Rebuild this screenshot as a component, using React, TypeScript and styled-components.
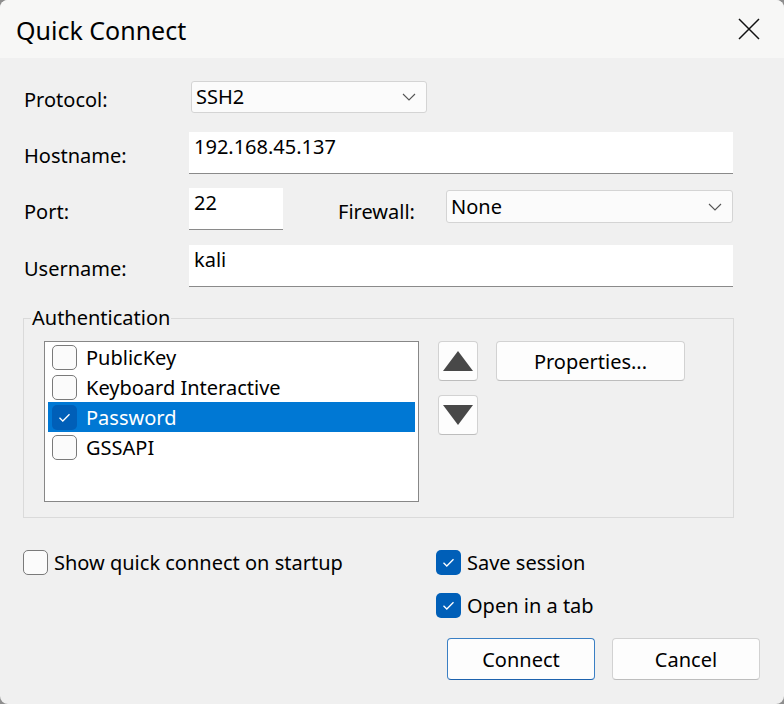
import React from 'react';
import styled, { createGlobalStyle } from 'styled-components';

const Global = createGlobalStyle`
  html, body { margin: 0; padding: 0; background: #8e8e8e; }
  body {
    width: 784px; height: 704px; overflow: hidden;
    font-family: "Noto Sans", "Open Sans", sans-serif;
    color: #000;
  }
  * { box-sizing: border-box; }
`;

const Window = styled.div`
  width: 784px;
  height: 704px;
  border-radius: 8px;
  overflow: hidden;
  background: #f0f0f0;
  display: flex;
  flex-direction: column;
`;

const TitleBar = styled.div`
  height: 58px;
  flex: none;
  background: #f7f7f6;
  display: flex;
  align-items: center;
  justify-content: space-between;
  padding: 0 23px 0 16px;
`;

const Title = styled.div`
  font-size: 25px;
  line-height: 30px;
  margin-top: 1px;
`;

const Close = styled.div`
  width: 24px;
  height: 24px;
  display: flex;
  align-items: center;
  justify-content: center;
`;

const Body = styled.div`
  flex: 1;
  display: flex;
  flex-direction: column;
  padding: 23px 24px 0 24px;
  font-size: 20px;
`;

const Form = styled.div`
  width: 709px;
  display: flex;
  flex-direction: column;
`;

const Row = styled.div<{ $top: number; $h: number }>`
  display: flex;
  align-items: center;
  margin-top: ${p => p.$top}px;
  height: ${p => p.$h}px;
`;

const Label = styled.div<{ $w: number; $ml?: number }>`
  width: ${p => p.$w}px;
  margin-left: ${p => p.$ml ?? 0}px;
  flex: none;
  padding-top: 4px;
`;

const Select = styled.div<{ $w: number; $h: number; $ml?: number; $mt?: number }>`
  width: ${p => p.$w}px;
  height: ${p => p.$h}px;
  margin-left: ${p => p.$ml ?? 0}px;
  margin-top: ${p => p.$mt ?? 0}px;
  flex: none;
  background: #fbfbfb;
  border: 1px solid #d4d4d4;
  border-radius: 3px;
  display: flex;
  align-items: center;
  justify-content: space-between;
  padding: 0 10px 0 4px;
  align-self: flex-start;
  line-height: 28px;
`;

const Input = styled.div<{ $w?: number }>`
  ${p => (p.$w ? `width: ${p.$w}px; flex: none;` : 'flex: 1;')}
  height: 100%;
  background: #fff;
  border-bottom: 1px solid #8a8a8a;
  padding: 2px 5px 0 5px;
  line-height: 26px;
`;

const Group = styled.fieldset`
  margin: 19px 0 0 -1px;
  width: 711px;
  border: 1px solid #dadada;
  padding: 11px 0 15px 20px;
  min-width: 0;
`;

const Legend = styled.legend`
  padding: 0 1px;
  margin-left: -13px;
  line-height: 24px;
`;

const GroupInner = styled.div`
  display: flex;
  align-items: flex-start;
`;

const ListBox = styled.div`
  width: 375px;
  height: 161px;
  flex: none;
  background: #fff;
  border: 1px solid #878787;
  padding: 0 3px;
  margin-right: 19px;
`;

const Item = styled.div<{ $sel?: boolean }>`
  height: 30px;
  display: flex;
  align-items: center;
  padding-left: 4px;
  gap: 9px;
  background: ${p => (p.$sel ? '#0078d4' : 'transparent')};
  color: ${p => (p.$sel ? '#fff' : '#000')};
`;

const Box = styled.div<{ $on?: boolean }>`
  width: 25px;
  height: 25px;
  flex: none;
  border-radius: 5px;
  border: ${p => (p.$on ? 'none' : '1.5px solid #7a7a7a')};
  background: ${p => (p.$on ? '#005fb8' : '#fbfbfb')};
  display: flex;
  align-items: center;
  justify-content: center;
`;

const ArrowCol = styled.div`
  display: flex;
  flex-direction: column;
  gap: 14px;
  margin-right: 18px;
`;

const Btn = styled.div<{ $w: number; $h: number; $primary?: boolean }>`
  width: ${p => p.$w}px;
  height: ${p => p.$h}px;
  flex: none;
  background: #fdfdfd;
  border: 1px solid ${p => (p.$primary ? '#3a7fc4' : '#d2d2d2')};
  border-bottom-color: ${p => (p.$primary ? '#1d62ad' : '#bdbdbd')};
  border-radius: 4px;
  display: flex;
  align-items: center;
  justify-content: center;
`;

const Bottom = styled.div`
  display: flex;
  margin-top: 32px;
`;

const LeftCol = styled.div`
  width: 413px;
  margin-left: -1px;
`;

const RightCol = styled.div`
  display: flex;
  flex-direction: column;
  gap: 18px;
`;

const Check = styled.div`
  display: flex;
  align-items: center;
  gap: 6px;
  height: 25px;
`;

const Buttons = styled.div`
  display: flex;
  justify-content: flex-end;
  gap: 17px;
  margin-top: 20px;
`;

const Chevron = () => (
  <svg width="14" height="8" viewBox="0 0 14 8">
    <path d="M1 1 L7 7 L13 1" fill="none" stroke="#555" strokeWidth="1.1" />
  </svg>
);

const Tick = () => (
  <svg width="25" height="25" viewBox="0 0 25 25">
    <path d="M7.5 12.8 L10.8 16 L17.5 9.2" fill="none" stroke="#fff" strokeWidth="1.3" />
  </svg>
);

const Tri = ({ up }: { up?: boolean }) => (
  <svg width="32" height="22" viewBox="0 0 32 22">
    <path d={up ? 'M16 1 L31 21 L1 21 Z' : 'M1 1 L31 1 L16 21 Z'} fill="#484848" />
  </svg>
);

const CB = ({ on, children }: { on?: boolean; children: React.ReactNode }) => (
  <Check>
    <Box $on={on}>{on && <Tick />}</Box>
    <span>{children}</span>
  </Check>
);

export default function App() {
  return (
    <>
      <Global />
      <Window>
        <TitleBar>
          <Title>Quick Connect</Title>
          <Close>
            <svg width="22" height="22" viewBox="0 0 22 22">
              <path d="M1 1 L21 21 M21 1 L1 21" stroke="#111" strokeWidth="1.5" />
            </svg>
          </Close>
        </TitleBar>
        <Body>
          <Form>
            <Row $top={0} $h={32}>
              <Label $w={165}>Protocol:</Label>
              <Select $w={236} $h={32} $ml={2}>
                <span>SSH2</span>
                <Chevron />
              </Select>
            </Row>
            <Row $top={19} $h={42}>
              <Label $w={165}>Hostname:</Label>
              <Input>192.168.45.137</Input>
            </Row>
            <Row $top={14} $h={42}>
              <Label $w={165}>Port:</Label>
              <Input $w={94}>22</Input>
              <Label $w={108} $ml={55}>Firewall:</Label>
              <Select $w={287} $h={33} $mt={2}>
                <span>None</span>
                <Chevron />
              </Select>
            </Row>
            <Row $top={15} $h={42}>
              <Label $w={165}>Username:</Label>
              <Input>kali</Input>
            </Row>
          </Form>
          <Group>
            <Legend>Authentication</Legend>
            <GroupInner>
              <ListBox>
                <Item><Box /><span>PublicKey</span></Item>
                <Item><Box /><span>Keyboard Interactive</span></Item>
                <Item $sel><Box $on><Tick /></Box><span>Password</span></Item>
                <Item><Box /><span>GSSAPI</span></Item>
              </ListBox>
              <ArrowCol>
                <Btn $w={40} $h={40}><Tri up /></Btn>
                <Btn $w={40} $h={40}><Tri /></Btn>
              </ArrowCol>
              <Btn $w={189} $h={40}>Properties...</Btn>
            </GroupInner>
          </Group>
          <Bottom>
            <LeftCol>
              <CB>Show quick connect on startup</CB>
            </LeftCol>
            <RightCol>
              <CB on>Save session</CB>
              <CB on>Open in a tab</CB>
            </RightCol>
          </Bottom>
          <Buttons>
            <Btn $w={148} $h={42} $primary>Connect</Btn>
            <Btn $w={148} $h={42}>Cancel</Btn>
          </Buttons>
        </Body>
      </Window>
    </>
  );
}
